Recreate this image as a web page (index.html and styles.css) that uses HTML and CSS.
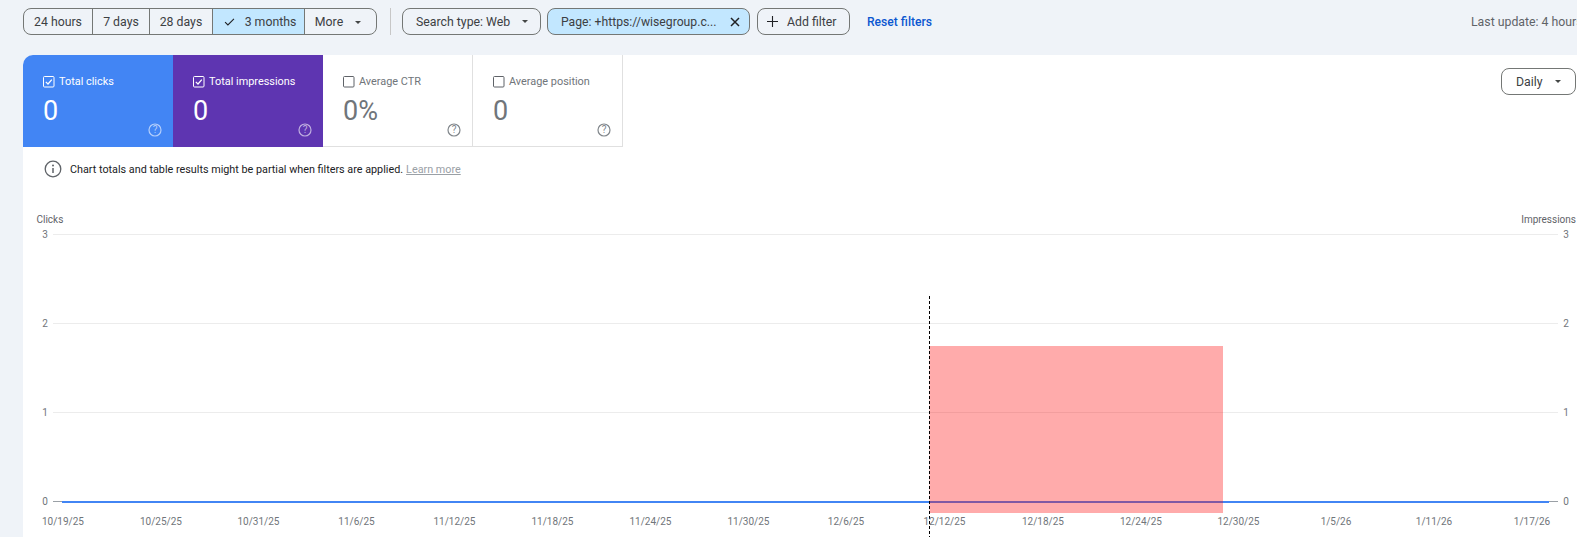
FILE: index.html
```html
<!DOCTYPE html>
<html lang="en">
<head>
<meta charset="utf-8">
<title>Performance</title>
<link rel="stylesheet" href="styles.css">
</head>
<body>
<header class="toolbar">
  <div class="segments">
    <button class="seg seg-24">24 hours</button>
    <button class="seg seg-7">7 days</button>
    <button class="seg seg-28">28 days</button>
    <button class="seg seg-3m seg-on"><svg class="check" viewBox="0 0 12 9"><path d="M1 4.6 4.2 7.8 11 1" fill="none" stroke="#202124" stroke-width="1.2"/></svg>3 months</button>
    <button class="seg seg-more">More<span class="caret"></span></button>
  </div>
  <span class="divider"></span>
  <button class="chip chip-search">Search type: Web<span class="caret"></span></button>
  <button class="chip chip-page">Page: +https://wisegroup.c...<svg class="close" viewBox="0 0 10 10"><path d="M1 1 9 9M9 1 1 9" fill="none" stroke="#202124" stroke-width="1.5"/></svg></button>
  <button class="chip chip-add"><svg class="plus" viewBox="0 0 11 11"><path d="M5.5 0V11M0 5.5H11" fill="none" stroke="#202124" stroke-width="1.1"/></svg>Add filter</button>
  <a class="reset">Reset filters</a>
  <span class="update">Last update: 4 hours ago</span>
</header>
<main class="panel">
  <div class="top">
    <div class="cards">
      <section class="card card-blue">
        <label class="card-label"><svg class="box" viewBox="0 0 12 12"><rect x=".5" y=".5" width="10.5" height="10.5" rx="1" fill="none" stroke="#fff"/><path d="M2.8 5.8 5 8 8.8 3.6" fill="none" stroke="#fff" stroke-width="1.2"/></svg>Total clicks</label>
        <div class="card-value">0</div>
        <svg class="help help-light" viewBox="0 0 14 14"><circle cx="7" cy="7" r="6" fill="none" stroke="currentColor" stroke-width="1.2"/><text x="7" y="10.400" text-anchor="middle" class="help-q">?</text></svg>
      </section>
      <section class="card card-purple">
        <label class="card-label"><svg class="box" viewBox="0 0 12 12"><rect x=".5" y=".5" width="10.5" height="10.5" rx="1" fill="none" stroke="#fff"/><path d="M2.8 5.8 5 8 8.8 3.6" fill="none" stroke="#fff" stroke-width="1.2"/></svg>Total impressions</label>
        <div class="card-value">0</div>
        <svg class="help help-light" viewBox="0 0 14 14"><circle cx="7" cy="7" r="6" fill="none" stroke="currentColor" stroke-width="1.2"/><text x="7" y="10.400" text-anchor="middle" class="help-q">?</text></svg>
      </section>
      <section class="card card-plain">
        <label class="card-label"><svg class="box" viewBox="0 0 12 12"><rect x=".5" y=".5" width="10.5" height="10.5" rx="1" fill="none" stroke="#5f6368"/></svg>Average CTR</label>
        <div class="card-value">0%</div>
        <svg class="help" viewBox="0 0 14 14"><circle cx="7" cy="7" r="6" fill="none" stroke="currentColor" stroke-width="1.2"/><text x="7" y="10.400" text-anchor="middle" class="help-q">?</text></svg>
      </section>
      <section class="card card-plain">
        <label class="card-label"><svg class="box" viewBox="0 0 12 12"><rect x=".5" y=".5" width="10.5" height="10.5" rx="1" fill="none" stroke="#5f6368"/></svg>Average position</label>
        <div class="card-value">0</div>
        <svg class="help" viewBox="0 0 14 14"><circle cx="7" cy="7" r="6" fill="none" stroke="currentColor" stroke-width="1.2"/><text x="7" y="10.400" text-anchor="middle" class="help-q">?</text></svg>
      </section>
    </div>
    <button class="chip chip-daily">Daily<span class="caret"></span></button>
  </div>
  <p class="notice"><svg class="info" viewBox="0 0 18 18"><circle cx="9" cy="9" r="7.8" fill="none" stroke="#5f6368" stroke-width="1.3"/><path d="M9 8v5" stroke="#5f6368" stroke-width="1.5"/><circle cx="9" cy="5.6" r="1" fill="#5f6368"/></svg>Chart totals and table results might be partial when filters are applied.<a class="learn">Learn more</a></p>
  <svg class="chart" viewBox="23 200 1554 337">
    <text class="axis-title" x="36.500" y="223">Clicks</text>
    <text class="axis-title" x="1576" y="223" text-anchor="end">Impressions</text>
    <g class="grid">
      <path d="M53 234.500H1558M53 323.500H1558M53 412.500H1558"/>
    </g>
    <path class="zero" d="M53 501.500H1558"/>
    <path class="series" d="M62 502H1549"/>
    <rect class="band" x="929.500" y="346" width="293.500" height="167"/>
    <path class="cursor" d="M929.500 296V537"/>
    <g class="tick-y">
      <text x="45" y="238">3</text><text x="45" y="327">2</text><text x="45" y="416">1</text><text x="45" y="505">0</text>
      <text x="1566" y="238">3</text><text x="1566" y="327">2</text><text x="1566" y="416">1</text><text x="1566" y="505">0</text>
    </g>
    <g class="tick-x">
      <text x="63" y="525">10/19/25</text>
      <text x="161" y="525">10/25/25</text>
      <text x="258.500" y="525">10/31/25</text>
      <text x="356.500" y="525">11/6/25</text>
      <text x="454.500" y="525">11/12/25</text>
      <text x="552.500" y="525">11/18/25</text>
      <text x="650.500" y="525">11/24/25</text>
      <text x="748.500" y="525">11/30/25</text>
      <text x="846" y="525">12/6/25</text>
      <text x="944.500" y="525">12/12/25</text>
      <text x="1043" y="525">12/18/25</text>
      <text x="1141" y="525">12/24/25</text>
      <text x="1238.500" y="525">12/30/25</text>
      <text x="1336" y="525">1/5/26</text>
      <text x="1434" y="525">1/11/26</text>
      <text x="1532" y="525">1/17/26</text>
    </g>
  </svg>
</main>
</body>
</html>
```
FILE: styles.css
```css
* { box-sizing: border-box; }
html, body { margin: 0; height: 537px; overflow: hidden; }
body {
  background: #eff3f8;
  font-family: Roboto, "Liberation Sans", sans-serif;
  color: #3c4043;
}
button { font: inherit; color: inherit; margin: 0; cursor: pointer; }

.toolbar {
  display: flex;
  align-items: center;
  height: 55px;
  padding: 8px 0 20px 23px;
  font-size: 12.300px;
  white-space: nowrap;
}
.segments {
  display: flex;
  height: 27px;
  border: 1px solid #747775;
  border-radius: 8px;
  overflow: hidden;
  flex: none;
}
.seg {
  height: 100%;
  padding: 0;
  background: none;
  border: 0;
  border-right: 1px solid #747775;
}
.seg-24 { width: 69px; }
.seg-7 { width: 57px; }
.seg-28 { width: 63px; }
.seg-3m { width: 92px; padding-left: 3px; }
.seg-3m .check { margin-right: 10px; }
.seg-more { width: 71px; border-right: 0; padding-right: 5px; }
.seg-on { background: #c2e7ff; }
.check { width: 11px; height: 8px; margin-right: 9px; }
.caret {
  display: inline-block;
  width: 0;
  height: 0;
  margin-left: 12px;
  vertical-align: 2px;
  border: 3.500px solid transparent;
  border-top-color: #444746;
  border-bottom: 0;
}
.divider {
  width: 1px;
  height: 27px;
  margin: 0 11px 0 13px;
  background: #c7c7c7;
  flex: none;
}
.chip {
  display: flex;
  align-items: center;
  height: 27px;
  background: none;
  border: 1px solid #747775;
  border-radius: 8px;
  padding: 0;
  flex: none;
}
.chip-search { width: 139px; padding-left: 13px; }
.chip-page { width: 203px; margin-left: 6px; padding-left: 13px; background: #c2e7ff; font-size: 12.200px; }
.chip-add { width: 93px; margin-left: 7px; padding-left: 9px; }
.close { width: 10px; height: 10px; margin-left: 14px; }
.plus { width: 11px; height: 11px; margin-right: 9px; }
.reset { margin-left: 17px; color: #0b57d0; font-weight: 500; font-size: 12.100px; }
.update { margin-left: 539px; color: #5f6368; }

.panel {
  margin-left: 23px;
  height: 482px;
  background: #fff;
  border-top-left-radius: 10px;
}
.top { display: flex; justify-content: space-between; align-items: flex-start; }
.cards { display: flex; }
.card {
  display: flex;
  flex-direction: column;
  width: 150px;
  height: 92px;
  padding: 20px 11px 0 20px;
  color: #70757a;
  border-right: 1px solid #e0e0e0;
  border-bottom: 1px solid #e0e0e0;
}
.card-blue {
  background: #4285f4;
  color: #fff;
  border: 0;
  border-top-left-radius: 10px;
}
.card-purple { background: #5e35b1; color: #fff; border: 0; }
.card-label { display: flex; align-items: center; font-size: 10.900px; height: 13px; }
.card-blue .card-label, .card-purple .card-label { font-weight: 450; }
.box { width: 12px; height: 12px; margin-right: 4px; flex: none; }
.card-value { font-size: 27px; line-height: 30px; margin-top: 8px; font-weight: 400; }
.help {
  width: 14px;
  height: 14px;
  margin: -3px 0 0 auto;
  color: #80868b;
}
.help-light { color: rgba(255, 255, 255, .6); }
.help-q { font-size: 10px; fill: currentColor; font-family: Roboto, sans-serif; }

.chip-daily {
  width: 75px;
  margin: 13px 1px 0 0;
  padding-left: 14px;
  font-size: 12.300px;
}
.notice {
  display: flex;
  align-items: center;
  margin: 0;
  height: 44px;
  padding-left: 21px;
  font-size: 10.800px;
  color: #202124;
}
.info { width: 18px; height: 18px; margin-right: 8px; flex: none; }
.learn { margin-left: 3px; color: #9aa0a6; text-decoration: underline; }

.chart { display: block; width: 1554px; height: 337px; margin-top: 9px; }
.axis-title { font-size: 10px; fill: #5f6368; }
.grid path { stroke: #ececec; stroke-width: 1; fill: none; }
.zero { stroke: #9aa0a6; stroke-width: 1; fill: none; }
.series { stroke: #4285f4; stroke-width: 2; fill: none; }
.band { fill: rgba(255, 0, 0, .33); }
.cursor { stroke: #000; stroke-width: 1; stroke-dasharray: 3 2; fill: none; }
.tick-y text { font-size: 10px; fill: #70757a; text-anchor: middle; }
.tick-x text { font-size: 10px; fill: #70757a; text-anchor: middle; }
```
